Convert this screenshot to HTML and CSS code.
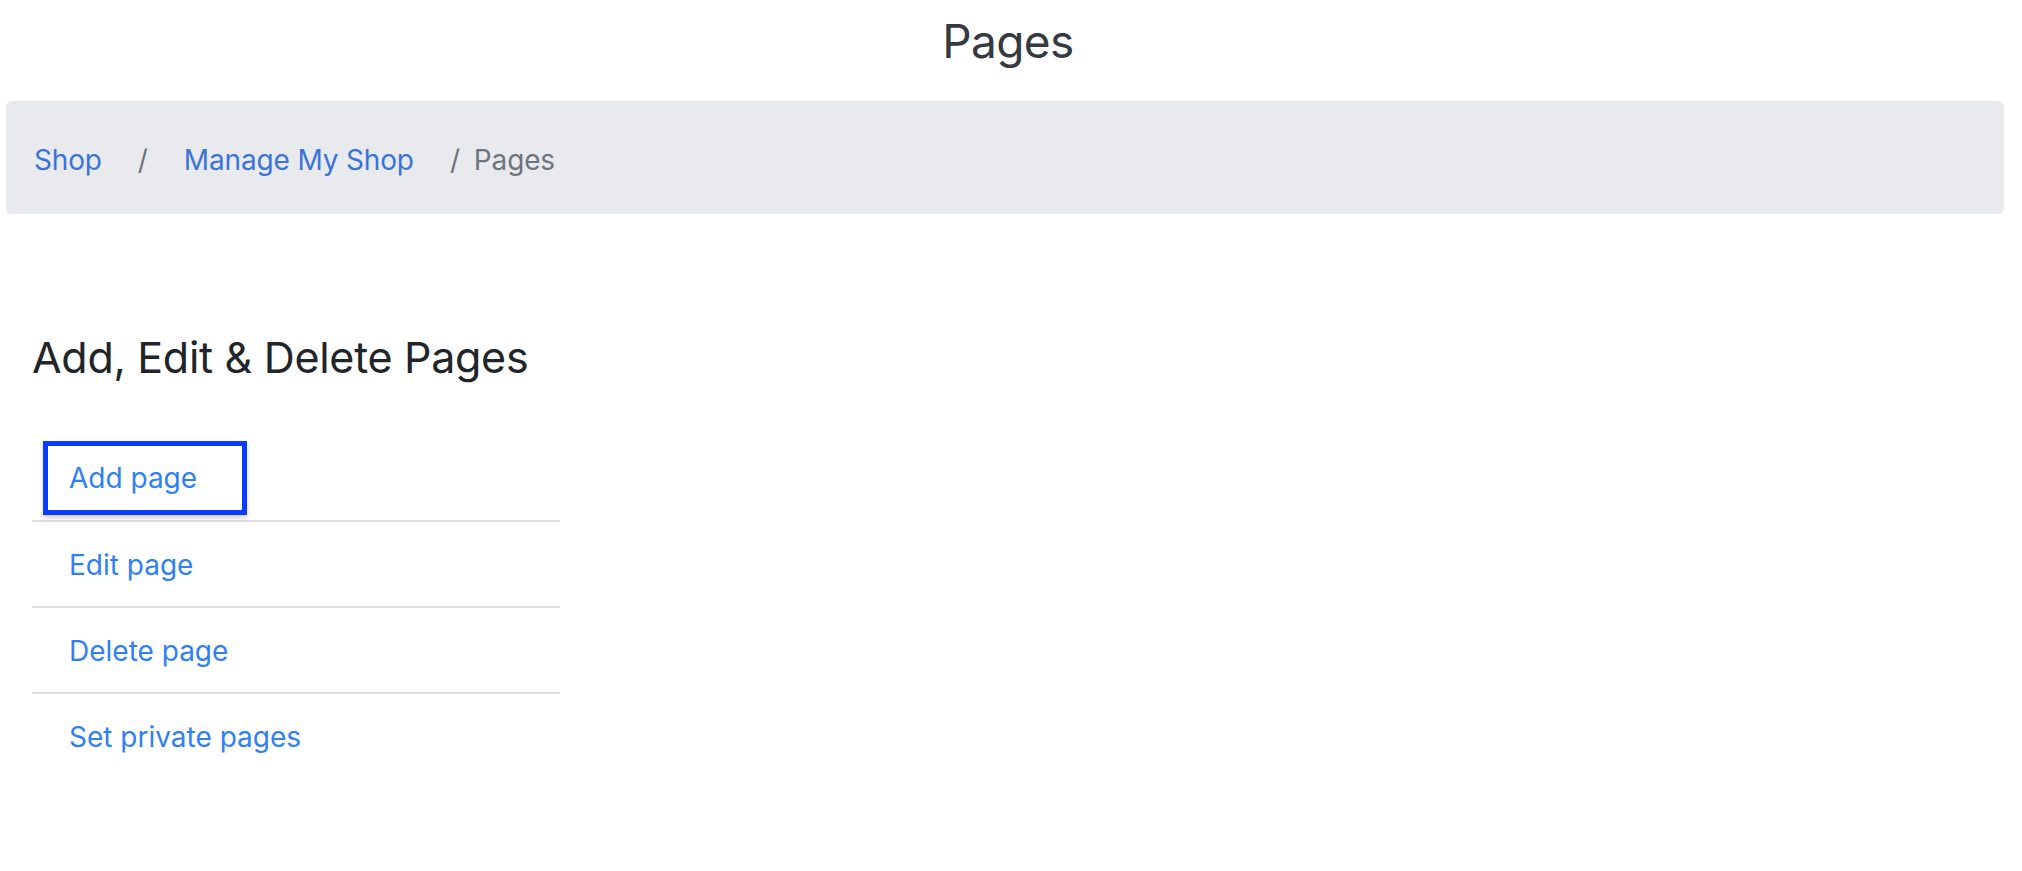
FILE: index.html
```html
<!DOCTYPE html>
<html lang="en">
<head>
<meta charset="utf-8">
<title>Pages</title>
<link rel="stylesheet" href="styles.css">
</head>
<body>
<header class="page-header">
  <h1 class="page-title">Pages</h1>
</header>
<nav class="crumbs" aria-label="breadcrumb">
  <ol class="crumb-list">
    <li class="crumb"><a href="#">Shop</a></li>
    <li class="crumb sep"><a href="#">Manage My Shop</a></li>
    <li class="crumb sep active">Pages</li>
  </ol>
</nav>
<main class="content">
  <h2 class="section-title">Add, Edit &amp; Delete Pages</h2>
  <ul class="menu">
    <li class="menu-item"><a class="menu-link focused" href="#">Add page</a></li>
    <li class="menu-item"><a class="menu-link" href="#">Edit page</a></li>
    <li class="menu-item"><a class="menu-link" href="#">Delete page</a></li>
    <li class="menu-item last"><a class="menu-link" href="#">Set private pages</a></li>
  </ul>
</main>
</body>
</html>
```
FILE: styles.css
```css
* { box-sizing: border-box; }
html, body { margin: 0; padding: 0; background: #ffffff; }
body {
  font-family: Inter, "Liberation Sans", Arial, sans-serif;
  color: #212529;
  padding: 0 18px 0 6px;
}
.page-header {
  display: flex;
  justify-content: center;
  height: 101px;
  padding-left: 6px;
}
.page-title {
  margin: 0;
  font-weight: 400;
  font-size: 46px;
  line-height: 1;
  padding-top: 18px;
  color: #343a40;
  letter-spacing: -0.6px;
}
.crumbs {
  background: #e9eaee;
  border-radius: 6px;
  height: 113px;
  display: flex;
  align-items: center;
  padding: 4px 6px 0;
}
.crumb-list {
  list-style: none;
  margin: 0;
  padding: 0;
  display: flex;
  align-items: center;
  font-size: 28px;
  letter-spacing: -0.15px;
}
.crumb a {
  color: #3a74d9;
  text-decoration: none;
  padding: 0 22px;
}
.crumb.sep::before {
  content: "/";
  color: #6c757d;
  padding: 0 14px;
}
.crumb.active { color: #6c757d; }
.content {
  padding: 118px 0 0 26px;
}
.section-title {
  margin: 0 0 52px;
  font-weight: 400;
  font-size: 43px;
  line-height: 1.2;
  color: #212529;
  letter-spacing: -0.3px;
}
.menu {
  list-style: none;
  margin: 0;
  padding: 0;
  width: 528px;
}
.menu-item {
  padding: 5px 0;
  border-bottom: 2px solid #dedede;
}
.menu-item.last { border-bottom: none; }
.menu-link {
  display: inline-block;
  margin-left: 11px;
  height: 74px;
  line-height: 66px;
  padding: 0 45px 0 21px;
  border: 5px solid transparent;
  font-size: 28px;
  color: #2f7ff5;
  text-decoration: none;
}
.menu-link.focused {
  border-color: #0a3cff;
  line-height: 64px;
  box-shadow: 0 3px 4px rgba(0, 0, 0, 0.18);
}
```
